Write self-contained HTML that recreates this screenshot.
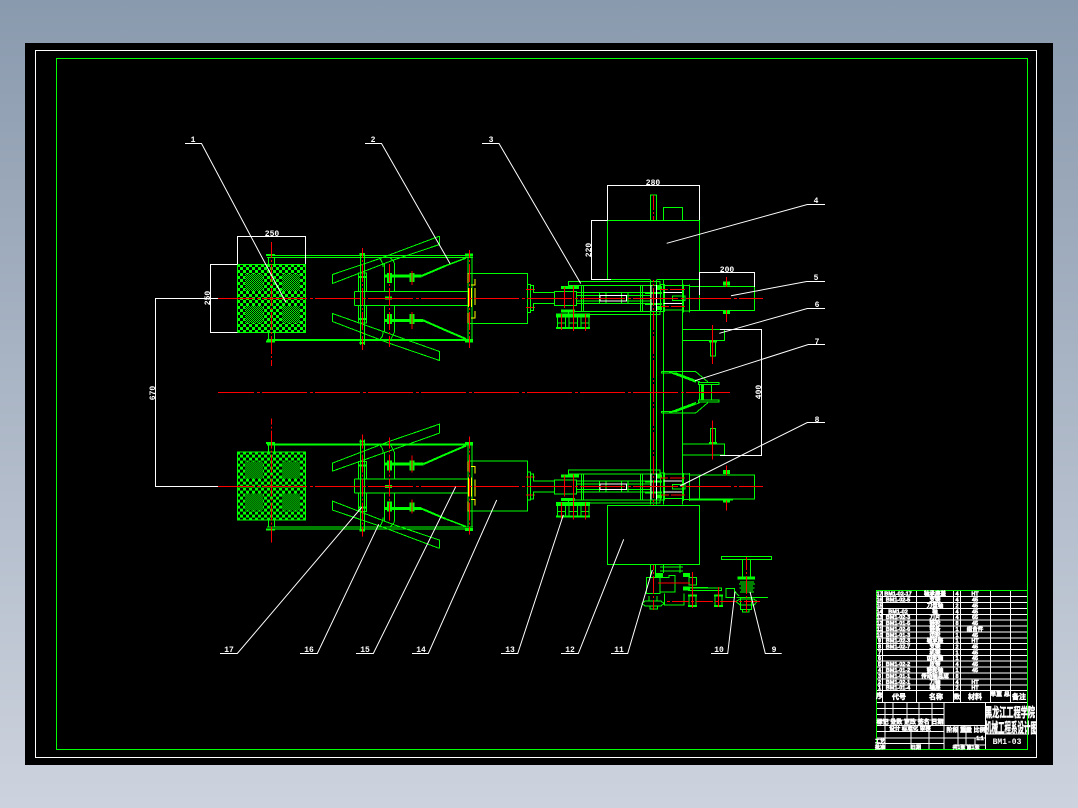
<!DOCTYPE html>
<html lang="zh">
<head>
<meta charset="utf-8">
<title>CAD</title>
<style>
html,body{margin:0;padding:0;width:1078px;height:808px;overflow:hidden;background:linear-gradient(180deg,#8a9aae 0%,#cdd3de 100%)}
svg{position:absolute;left:0;top:0;display:block}
text{font-family:"Liberation Mono","Noto Sans CJK SC",monospace;fill:#fff}
.l{font-size:8px;font-weight:bold;text-anchor:middle}
.t{font-family:"Liberation Sans","Noto Sans CJK SC",sans-serif;font-size:5.5px;font-weight:bold;text-anchor:middle;stroke:#fff;stroke-width:.5}
</style>
</head>
<body>
<svg width="1078" height="808" viewBox="0 0 1078 808" xmlns="http://www.w3.org/2000/svg">
<defs>
<pattern id="dh" width="53" height="4" patternUnits="userSpaceOnUse" x="50" y="0">
<rect width="45" height="4" fill="#f00"/><rect x="48" width="3" height="4" fill="#f00"/>
</pattern>
<pattern id="ds" width="24" height="4" patternUnits="userSpaceOnUse">
<rect width="17" height="4" fill="#f00"/><rect x="19" width="3" height="4" fill="#f00"/>
</pattern>
<pattern id="dv" width="4" height="24" patternUnits="userSpaceOnUse">
<rect width="4" height="18" fill="#f00"/><rect y="20" width="4" height="2" fill="#f00"/>
</pattern>
<pattern id="h" width="6" height="6" patternUnits="userSpaceOnUse" x="237" y="264">
<rect width="6" height="6" fill="#000"/><rect width="3" height="3" fill="#0f0"/><rect x="3" y="3" width="3" height="3" fill="#0f0"/>
</pattern>
<pattern id="f" width="2" height="2" patternUnits="userSpaceOnUse" x="237" y="264">
<rect width="2" height="2" fill="#000"/><rect width="1" height="1" fill="#0f0"/><rect x="1" y="1" width="1" height="1" fill="#0f0"/>
</pattern>
<g id="hatch" shape-rendering="crispEdges">
<rect x="237.5" y="264.5" width="68" height="68" fill="url(#h)" stroke="#0f0"/>
<rect x="245" y="274" width="18" height="17" fill="url(#f)"/>
<rect x="282" y="274" width="18" height="17" fill="url(#f)"/>
<rect x="245" y="306" width="18" height="17" fill="url(#f)"/>
<rect x="282" y="306" width="18" height="17" fill="url(#f)"/>
</g>
<g id="L" fill="none" shape-rendering="crispEdges">
<g stroke="#0f0">
<path d="M267 255.5H473M267 257.5H473"/>
<path d="M267 340H473" stroke-width="2"/>
<path d="M268.5 257V264M274.5 257V264M268.5 333V340M274.5 333V340"/>
<path d="M266 255H275M266 341.5H275" stroke-width="2"/>
<path d="M360.5 253V345M364.5 253V345"/>
<path d="M358.5 292V273H366.5V292M358.5 305.5V323H366.5V305.5"/>
<path d="M359.5 254H365M359.5 343H365M359 277H366M359 319H366" stroke-width="2"/>
<path d="M384.5 291V263M394.5 291V263M384.5 305.5V332M394.5 305.5V332"/>
<path d="M380 258.5Q383 263 383 267M390 258Q394 260 394.5 264M383 332Q383 337 380 339M394.5 332L391 339"/>
<path d="M354.5 291.5H468M354.5 305.5H468M354.5 291.5V305.5"/>
<path d="M385 298H392" stroke-width="3"/>
<path d="M332.5 274.5L380 258.5L438.5 236.5H439.5V244.5L393.5 260L332.5 283.5Z"/>
<path d="M332.5 313.5L439.5 351.5V360.5L390 343.5L332.5 321.5Z"/>
<path d="M385 276H421.5" stroke-width="3"/>
<path d="M421.5 276L445 266" stroke-width="2"/>
<path d="M445 266L466 258" stroke-width="1.5"/>
<path d="M385 320.5H423.5" stroke-width="3"/>
<path d="M423.5 320.5L445 330" stroke-width="2"/>
<path d="M445 330L466 339" stroke-width="2"/>
<path d="M389.5 273V283M412 273V282M389.5 314V324M412 314V324" stroke-width="5"/>
<path d="M468 257V340M472 257V340"/>
<path d="M465 255H473M465 341H473" stroke-width="3"/>
<path d="M468 273.5H527.5V323.5H468"/>
<path d="M527.5 284.5H530.5V312.5H527.5"/>
</g>
<g stroke="#ff0" stroke-width="1">
<path d="M468 273V283M468.5 288V307M468 313V323M471.5 288V307M475 279V285H471M475 288V305M475 311V318H471"/>
</g>
<rect x="271" y="242" width="1" height="124" fill="url(#dv)"/>
<rect x="362" y="248" width="1" height="102" fill="url(#dv)"/>
<rect x="389" y="263" width="1" height="84" fill="url(#dv)"/>
<rect x="469" y="250" width="1" height="98" fill="url(#dv)"/>
<g stroke="#f00">
<path d="M412 271V285M412 312V329"/>
<path d="M526 289.5H535M526 307.5H535"/>
</g>
</g>
<g id="M" fill="none" shape-rendering="crispEdges">
<g stroke="#0f0">
<path d="M530.5 285.5H533.5V292.5M530.5 310.5H533.5V303.5"/>
<path d="M533 292.5H554.5M533 303.5H554.5"/>
<path d="M554.5 291.5H576.5V305.5H554.5Z"/>
<path d="M561 287.5H579M561 311H575" stroke-width="3"/>
<path d="M568.5 281.5H660V285.5H568.5ZM568.5 311.5H660V314.5H568.5Z"/>
<path d="M581.5 285V311M583.5 285V311M640.5 285V311M642.5 285V311"/>
<path d="M576 292.5H660M576 303.5H660M576 295.5H650M576 301H650"/>
<path d="M599.5 292.5H606V303.5H599.5ZM621.5 292.5H628V303.5H621.5Z"/>
<path d="M645 293H662M645 304H662" stroke-width="2"/>
<path d="M660.5 284.5H664.5V311.5H660.5Z"/>
<path d="M657 288H662M657 308H662" stroke-width="4"/>
<path d="M672.5 296H685V300.5H672.5Z"/>
<path d="M664 285.5H683M664 310H683"/>
<path d="M556 315.5H590" stroke-width="4"/>
<path d="M556 328H590" stroke-width="2"/>
<path d="M557.5 317V328M565.5 317V328M569 317V328M577.5 317V328M581 317V328M589 317V328"/>
<path d="M557 323H566M569 323H578M581 323H589"/>
<path d="M683.5 284.5V312.5M689.5 284.5V312.5"/>
<path d="M683 285.5H689M683 311H689"/>
<path d="M689.5 286.5H754.5V310.5H689.5Z"/>
<path d="M699.5 286.5V310.5"/>
<path d="M723 283.5H730M723 312H730" stroke-width="4"/>
</g>
<g stroke="#fff">
<path d="M600 295.5H626.5V301H600ZM651 285V311M656.5 285V311M663.5 292.5H682M663.5 303.5H682"/>
</g>
<g stroke="#f00">
<path d="M564.5 287V308"/>
<path d="M573.5 286V331"/>
<path d="M561.5 314V330M585.5 314V331"/>
<path d="M660 289.5H668M670 289.5H685M661 306.5H669M671 306.5H685"/>
<path d="M726.5 277V287M726.5 310V322"/>
</g>
</g>
<g id="F" fill="none" shape-rendering="crispEdges">
<g stroke="#0f0">
<path d="M650.5 280V392.5M656.5 280V392.5M663.5 280V392.5M682.5 280V392.5"/>
<path d="M682.5 329.5H724.5V340.5H682.5"/>
<path d="M710.5 342V356H715.5V342"/>
<path d="M709 341.5H717" stroke-width="2"/>
<path d="M661.5 371.5H695.5L708 382M661.5 371.5V373H676L700 382"/>
<path d="M669 372L694 380M672 373L696 382" stroke-width="1.5"/>
<path d="M698.5 382.5H719V384.5H698.5Z"/>
<path d="M699.5 384.5V392.5M711.5 384.5V392.5"/>
<path d="M702.5 384V392.5" stroke-width="3"/>
</g>
<path d="M712.5 325V364" stroke="#f00"/>
</g>
</defs>
<rect x="25" y="43" width="1028" height="722" fill="#000"/>
<g fill="none" shape-rendering="crispEdges">
<rect x="35.5" y="50.5" width="1001" height="707" stroke="#fff"/>
<rect x="56.5" y="58.5" width="971" height="691" stroke="#0f0"/>
</g>

<use href="#hatch"/>
<use href="#hatch" transform="translate(0,784.6) scale(1,-1)"/>
<use href="#L"/>
<use href="#L" transform="translate(0,784.6) scale(1,-1)"/>
<use href="#F"/>
<use href="#F" transform="translate(0,784.6) scale(1,-1)"/>
<use href="#M"/>
<use href="#M" transform="translate(0,188.3)"/>

<g fill="none" shape-rendering="crispEdges">
<g stroke="#0f0">
<path d="M607.5 220.5H699.5V286M607.5 220.5V279.5H650.5M656.5 279.5H699.5"/>
<path d="M650.5 220.5V195H656.5V220.5M663.5 220.5V207.5H682.5V220.5"/>
<path d="M607.5 505.5H699.5V564.5H607.5Z"/>
<path d="M690 499.5H733" stroke-width="2"/>
<path d="M650.5 565V577M655.5 565V577"/>
<path d="M660 567H683M660 571H683M663.5 565V573M680 565V573"/>
<path d="M646.5 577.5H660V593.5H646.5Z"/>
<path d="M660 577.5H669V575.5H675V592H660"/>
<path d="M664.5 593.5V605H684V593.5"/>
<path d="M649 596V601H657V596M645 601H661L664 603.5L661 606H645L642 603.5ZM650 606V609H657.5V606"/>
<path d="M656 575H663M683 575H690M683 588.5H690" stroke-width="4"/>
<path d="M689 577.5H696.5V585H689Z"/>
<path d="M688.5 588H721.5V590.5H688.5ZM690 587.5H708"/>
<path d="M688 595.5H697M714 595.5H723M688 606H697M714 606H723" stroke-width="2"/>
<path d="M689 595.5V606M696 595.5V606M715 595.5V606M722 595.5V606"/>
<path d="M726 588.5H734.5V597.5H726ZM734.5 591L739 596"/>
<path d="M721.5 556.5H771.5V559.5H721.5Z"/>
<path d="M742.5 559.5V578M750.5 559.5V578"/>
<path d="M737.5 578H755" stroke-width="3"/>
<path d="M740 582H754M739 584H755M741 586H753M739.5 588H754.5M741 590H753M740 592H754"/>
<path d="M736.5 597.5H768"/>
<path d="M740 599H754L757 601.5L754 605H740L736 601.5Z"/>
<path d="M740.5 598V609.5H751.5V598M742.5 609.5V612H749V609.5"/>
</g>
<rect x="653" y="195" width="1" height="25" fill="url(#dv)"/>
<rect x="653" y="280" width="1" height="225" fill="url(#dv)"/>
<rect x="653" y="565" width="1" height="45" fill="url(#dv)"/>
<rect x="746" y="557" width="1" height="55" fill="url(#dv)"/>
<rect x="666" y="601" width="94" height="1" fill="url(#ds)"/>
<g stroke="#f00">
<path d="M658 583H690"/>
<path d="M692.5 572V608M718.5 587V607"/>
</g>
<rect x="218" y="298" width="545" height="1" fill="url(#dh)"/>
<rect x="218" y="392" width="512" height="1" fill="url(#dh)"/>
<rect x="218" y="486" width="545" height="1" fill="url(#dh)"/>
<g stroke="#fff">
<path d="M237.5 264V236.5H305.5V264M237.5 264.5H210.5V332.5H237.5"/>
<path d="M218 298.5H155.5V486.5H218"/>
<path d="M607.5 220.5V185.5H699.5V220M607.5 220.5H591.5V279.5H611"/>
<path d="M699.5 295V272.5H754.5V287"/>
<path d="M720 329.5H761.5V455.5H720"/>
</g>
</g>
<g fill="none" stroke="#fff" stroke-width="1">
<path d="M185 143.5H201.5L285.7 302"/>
<path d="M365 143.5H381.5L450 263.5"/>
<path d="M482 143.5H499L580.7 283.5"/>
<path d="M666.7 243.3L807.3 204.5H825"/>
<path d="M731 295.7L806.7 281.5H825"/>
<path d="M719.3 333.3L807.3 308.5H825"/>
<path d="M695 380.7L808.3 344.5H825"/>
<path d="M680 486L807.3 422.5H825"/>
<path d="M750 591.7L765.3 653.5H781.7"/>
<path d="M735 591.7L727.7 653.5H711"/>
<path d="M652.3 570L627.7 653.5H611"/>
<path d="M623.7 539.3L578.3 653.5H561"/>
<path d="M563.3 515L517.7 653.5H501"/>
<path d="M496.7 500L428.3 653.5H412"/>
<path d="M455.7 486.7L373.3 653.5H356"/>
<path d="M378.7 524.3L317.3 653.5H300"/>
<path d="M361.7 507.3L237.3 653.5H220"/>
</g>
<text class="l" x="193" y="142">1</text>
<text class="l" x="373" y="142">2</text>
<text class="l" x="491" y="142">3</text>
<text class="l" x="816" y="203">4</text>
<text class="l" x="816" y="280">5</text>
<text class="l" x="817" y="307">6</text>
<text class="l" x="817" y="344">7</text>
<text class="l" x="817" y="422">8</text>
<text class="l" x="774" y="652">9</text>
<text class="l" x="719" y="652">10</text>
<text class="l" x="619" y="652">11</text>
<text class="l" x="570" y="652">12</text>
<text class="l" x="510" y="652">13</text>
<text class="l" x="421" y="652">14</text>
<text class="l" x="365" y="652">15</text>
<text class="l" x="309" y="652">16</text>
<text class="l" x="229" y="652">17</text>
<text class="l" x="272" y="236">250</text>
<text class="l" x="653" y="185">280</text>
<text class="l" x="727" y="272">200</text>
<text class="l" transform="translate(210,298) rotate(-90)">250</text>
<text class="l" transform="translate(591,250) rotate(-90)">220</text>
<text class="l" transform="translate(761,392) rotate(-90)">400</text>
<text class="l" transform="translate(155,393) rotate(-90)">670</text>

<g fill="none" stroke="#fff" shape-rendering="crispEdges">
<path d="M876 596.5H1027M876 602.5H1027M876 608.5H1027M876 614.5H1027M876 620H1027M876 626H1027M876 632H1027M876 638H1027M876 643.5H1027M876 649.5H1027M876 655.5H1027M876 661H1027M876 667H1027M876 673H1027M876 679H1027M876 685H1027M876 690.5H1027M876 702.5H1027"/>
<path d="M882.5 590V702.5M916.5 590V702.5M953.5 590V702.5M960.5 590V702.5M990.5 590V702.5M1010.5 590V702.5"/>
<path d="M885 702.5V749M893 702.5V725M907 702.5V725M919 702.5V725M932 702.5V725M944 702.5V749"/>
<path d="M876 708.5H944M876 714.5H944M876 720H944M876 725.5H985M876 731.5H944M876 738H985M876 743.5H944"/>
<path d="M985.5 702.5V749M985 734H1027"/>
<path d="M958 725.5V745M966 725.5V745M975 738V745M911 725.5V749M929 731.5V749M955 745H985"/>
</g>
<rect x="876.5" y="590.5" width="151" height="159" fill="none" stroke="#0f0" shape-rendering="crispEdges"/>
<g>
<text class="t" x="879.5" y="595.5">17</text><text class="t" x="898" y="595.5">BM1-02-17</text><text class="t" x="935" y="595.5">轴承座盖</text><text class="t" x="957" y="595.5">4</text><text class="t" x="975" y="595.5">HT</text>
<text class="t" x="879.5" y="601.5">16</text><text class="t" x="898" y="601.5">BM1-02-5</text><text class="t" x="935" y="601.5">支架</text><text class="t" x="957" y="601.5">4</text><text class="t" x="975" y="601.5">45</text>
<text class="t" x="879.5" y="607.5">15</text><text class="t" x="935" y="607.5">刀盘轴</text><text class="t" x="957" y="607.5">2</text><text class="t" x="975" y="607.5">45</text>
<text class="t" x="879.5" y="613.5">14</text><text class="t" x="898" y="613.5">BM1-02</text><text class="t" x="935" y="613.5">轴</text><text class="t" x="957" y="613.5">4</text><text class="t" x="975" y="613.5">45</text>
<text class="t" x="879.5" y="619">13</text><text class="t" x="898" y="619">BM1-02-3</text><text class="t" x="935" y="619">刀片</text><text class="t" x="957" y="619">4</text><text class="t" x="975" y="619">65</text>
<text class="t" x="879.5" y="625">12</text><text class="t" x="898" y="625">BM1-01-5</text><text class="t" x="935" y="625">链轮</text><text class="t" x="957" y="625">8</text><text class="t" x="975" y="625">45</text>
<text class="t" x="879.5" y="631">11</text><text class="t" x="898" y="631">BM1-02-6</text><text class="t" x="935" y="631">链条</text><text class="t" x="957" y="631">1</text><text class="t" x="975" y="631">组合件</text>
<text class="t" x="879.5" y="637">10</text><text class="t" x="898" y="637">BM1-01-3</text><text class="t" x="935" y="637">齿轮</text><text class="t" x="957" y="637">1</text><text class="t" x="975" y="637">45</text>
<text class="t" x="879.5" y="642.5">9</text><text class="t" x="898" y="642.5">BM1-02-3</text><text class="t" x="935" y="642.5">轴承座</text><text class="t" x="957" y="642.5">1</text><text class="t" x="975" y="642.5">HT</text>
<text class="t" x="879.5" y="648.5">8</text><text class="t" x="898" y="648.5">BM1-02-7</text><text class="t" x="935" y="648.5">支架</text><text class="t" x="957" y="648.5">2</text><text class="t" x="975" y="648.5">45</text>
<text class="t" x="879.5" y="654.5">7</text><text class="t" x="935" y="654.5">机架</text><text class="t" x="957" y="654.5">1</text><text class="t" x="975" y="654.5">45</text>
<text class="t" x="879.5" y="660">6</text><text class="t" x="935" y="660">齿轮箱</text><text class="t" x="957" y="660">1</text><text class="t" x="975" y="660">45</text>
<text class="t" x="879.5" y="666">5</text><text class="t" x="898" y="666">BM1-02-2</text><text class="t" x="935" y="666">皮带</text><text class="t" x="957" y="666">4</text><text class="t" x="975" y="666">45</text>
<text class="t" x="879.5" y="672">4</text><text class="t" x="898" y="672">BM1-01-2</text><text class="t" x="935" y="672">链轮轴</text><text class="t" x="957" y="672">1</text><text class="t" x="975" y="672">45</text>
<text class="t" x="879.5" y="678">3</text><text class="t" x="898" y="678">BM1-01-1</text><text class="t" x="935" y="678">传动轴总成</text><text class="t" x="957" y="678">8</text>
<text class="t" x="879.5" y="684">2</text><text class="t" x="898" y="684">BM1-02-1</text><text class="t" x="935" y="684">刀轴</text><text class="t" x="957" y="684">4</text><text class="t" x="975" y="684">HT</text>
<text class="t" x="879.5" y="689.5">1</text><text class="t" x="898" y="689.5">BM1-01-4</text><text class="t" x="935" y="689.5">轴座</text><text class="t" x="957" y="689.5">2</text><text class="t" x="975" y="689.5">HT</text>
<text class="t" x="879.5" y="698" style="font-size:7px">序</text><text class="t" x="899" y="699" style="font-size:7px">代号</text><text class="t" x="936" y="699" style="font-size:7px">名称</text><text class="t" x="957" y="699" style="font-size:6px">数</text><text class="t" x="975" y="699" style="font-size:7px">材料</text><text class="t" x="1000" y="696" style="font-size:6px">单重 总</text><text class="t" x="1019" y="699" style="font-size:7px">备注</text>
<text class="t" x="910" y="724" style="font-size:6px">标记 处数 更改 签名 日期</text>
<text class="t" x="910" y="730.5" style="font-size:5.5px">设计 标准化 审核</text>
<text class="t" x="966" y="732" style="font-size:6px">阶段 重量 比例</text>
<text class="t" x="980" y="740" style="font-size:5px">1:1</text>
<text class="t" x="880" y="743" style="font-size:5px">工艺</text>
<text class="t" x="880" y="749" style="font-size:5px">批准</text>
<text class="t" x="916" y="749" style="font-size:5px">日期</text>
<text class="t" x="966" y="749" style="font-size:5px">共1张 第1张</text>
<text x="985" y="717" textLength="50" lengthAdjust="spacingAndGlyphs" style="font-family:'Liberation Sans','Noto Sans CJK SC',sans-serif;font-size:13px;font-weight:bold;stroke:#fff;stroke-width:.5">黑龙江工程学院</text>
<text x="985" y="733" textLength="52" lengthAdjust="spacingAndGlyphs" style="font-family:'Liberation Sans','Noto Sans CJK SC',sans-serif;font-size:14px;font-weight:bold;stroke:#fff;stroke-width:.5">机械工程系设计图</text>
<text x="1007" y="744" text-anchor="middle" style="font-size:8px;font-weight:bold">BM1-03</text>
</g>
</svg>
</body>
</html>
